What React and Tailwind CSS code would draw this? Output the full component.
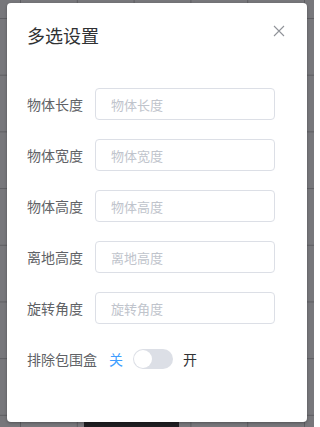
import { useState } from "react";

const fields = ["物体长度", "物体宽度", "物体高度", "离地高度", "旋转角度"];

const FormRow = ({ label }) => (
  <div className="flex items-center h-8 mb-[19px]">
    <label className="w-[68px] pr-3 text-sm text-[#606266] whitespace-nowrap">{label}</label>
    <input
      placeholder={label}
      className="w-[180px] h-8 px-[15px] text-[13px] text-[#606266] border border-[#dcdfe6] rounded outline-none placeholder:text-[#c0c4cc]"
    />
  </div>
);

export default function App() {
  const [on, setOn] = useState(false);

  return (
    <div
      className="relative w-[314px] h-[427px] overflow-hidden bg-[#77777b] pt-[3px] pl-[7px] bg-[linear-gradient(to_right,#5e5e62_1px,transparent_1px),linear-gradient(to_bottom,#5e5e62_1px,transparent_1px)] [background-size:56.8px_56.7px] [background-position:20px_18px]"
      style={{ fontFamily: '"Noto Sans CJK SC", "Noto Sans", sans-serif' }}
    >
      <div className="absolute left-[84px] top-[420px] w-[95px] h-[10px] bg-[#1f1f22]" />

      <div className="relative w-[300px] h-[419px] bg-white rounded-sm shadow-[0_1px_3px_rgba(0,0,0,0.3)]">
        <div className="flex items-center justify-between pt-5 pb-[10px] px-5">
          <span className="text-lg leading-6 text-[#303133]">多选设置</span>
          <button className="-mt-[8px] mr-[2px] text-[#909399]">
            <svg width="12" height="12" viewBox="0 0 12 12">
              <path d="M1 1 L11 11 M11 1 L1 11" stroke="currentColor" strokeWidth="1.1" fill="none" />
            </svg>
          </button>
        </div>

        <div className="px-5 pt-[31px]">
          {fields.map((f) => (
            <FormRow key={f} label={f} />
          ))}

          <div className="flex items-center h-8">
            <span className="text-sm text-[#606266] whitespace-nowrap mr-3">排除包围盒</span>
            <span className={`text-sm ${on ? "text-[#303133]" : "text-[#409eff]"}`}>关</span>
            <button
              onClick={() => setOn(!on)}
              className={`relative mx-[10px] w-10 h-5 rounded-full ${on ? "bg-[#409eff]" : "bg-[#dcdfe6]"}`}
            >
              <span
                className={`absolute top-[1px] w-[18px] h-[18px] rounded-full bg-white ${on ? "left-[21px]" : "left-[1px]"}`}
              />
            </button>
            <span className={`text-sm ${on ? "text-[#409eff]" : "text-[#303133]"}`}>开</span>
          </div>
        </div>
      </div>
    </div>
  );
}
